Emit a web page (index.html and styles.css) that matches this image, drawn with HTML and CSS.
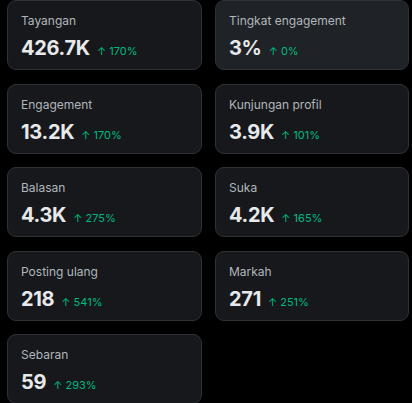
FILE: index.html
```html
<!DOCTYPE html>
<html lang="id">
<head>
  <meta charset="UTF-8">
  <meta name="viewport" content="width=device-width, initial-scale=1.0">
  <title>Statistik postingan</title>
  <link rel="stylesheet" href="styles.css">
</head>
<body>

  <div id="stats">
    <div class="statCard">
      <div class="statLabel">Tayangan</div>
      <div class="statRow"><span class="statValue">426.7K</span><span class="statChange">↑ 170%</span></div>
    </div>
    <div class="statCard active">
      <div class="statLabel">Tingkat engagement</div>
      <div class="statRow"><span class="statValue">3%</span><span class="statChange">↑ 0%</span></div>
    </div>
    <div class="statCard">
      <div class="statLabel">Engagement</div>
      <div class="statRow"><span class="statValue">13.2K</span><span class="statChange">↑ 170%</span></div>
    </div>
    <div class="statCard">
      <div class="statLabel">Kunjungan profil</div>
      <div class="statRow"><span class="statValue">3.9K</span><span class="statChange">↑ 101%</span></div>
    </div>
    <div class="statCard">
      <div class="statLabel">Balasan</div>
      <div class="statRow"><span class="statValue">4.3K</span><span class="statChange">↑ 275%</span></div>
    </div>
    <div class="statCard">
      <div class="statLabel">Suka</div>
      <div class="statRow"><span class="statValue">4.2K</span><span class="statChange">↑ 165%</span></div>
    </div>
    <div class="statCard">
      <div class="statLabel">Posting ulang</div>
      <div class="statRow"><span class="statValue">218</span><span class="statChange">↑ 541%</span></div>
    </div>
    <div class="statCard">
      <div class="statLabel">Markah</div>
      <div class="statRow"><span class="statValue">271</span><span class="statChange">↑ 251%</span></div>
    </div>
    <div class="statCard">
      <div class="statLabel">Sebaran</div>
      <div class="statRow"><span class="statValue">59</span><span class="statChange">↑ 293%</span></div>
    </div>
  </div>

</body>
</html>
```

FILE: styles.css
```css
body {
  font-family: Inter, "Noto Sans", sans-serif;
  background-color: #000;
  color: #e7e9ea;
  margin: 0;
  padding: 0;
}

#stats {
  display: grid;
  grid-template-columns: 195px 194px;
  column-gap: 13px;
  row-gap: 13.5px;
  padding: 0 3px 0 7px;
}

.statCard {
  box-sizing: border-box;
  height: 70px;
  background-color: #16181c;
  border: 1px solid #2f3336;
  border-radius: 9px;
  padding: 12px 13px;
}

.statCard.active {
  background-color: #1f2226;
}

.statLabel {
  font-size: 12px;
  line-height: 16px;
  color: #b1b6bb;
}

.statRow {
  display: flex;
  align-items: baseline;
  gap: 7px;
  margin-top: 7px;
}

.statValue {
  font-size: 20px;
  font-weight: 700;
  line-height: 24px;
  letter-spacing: -0.3px;
}

.statChange {
  font-size: 11px;
  color: #00ba7c;
}
```
